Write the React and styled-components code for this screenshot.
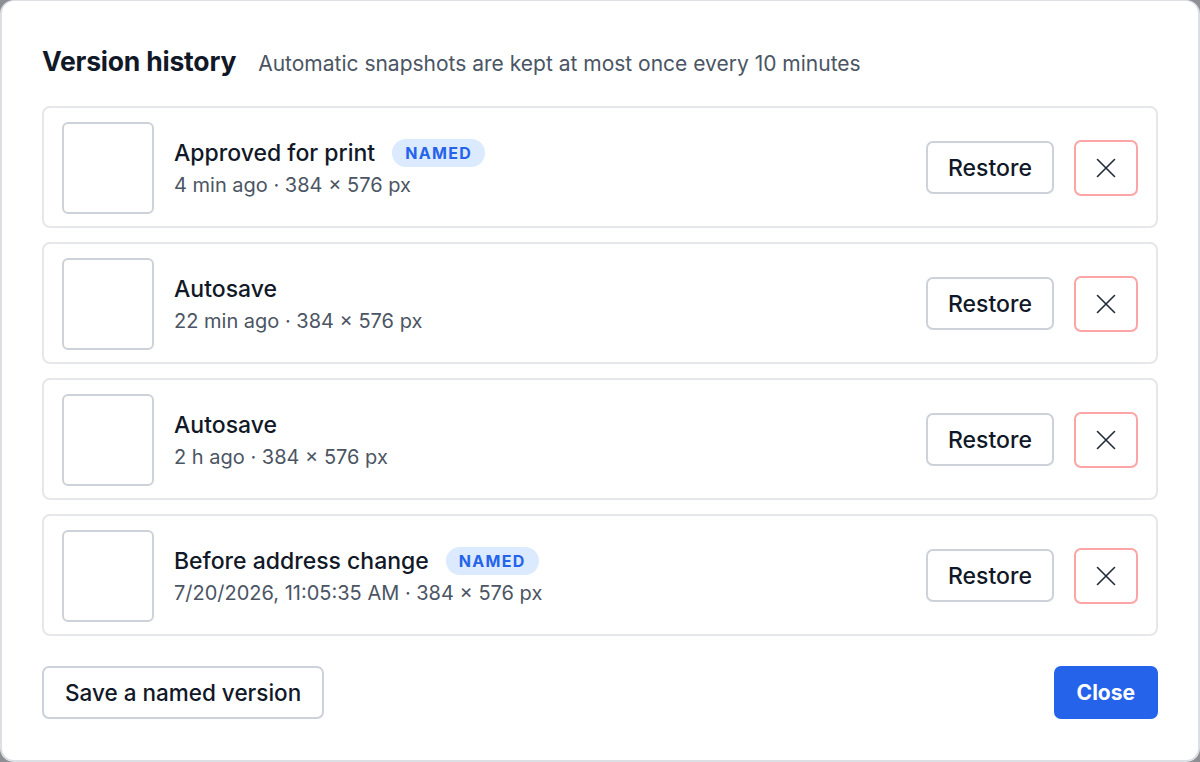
import React from 'react';
import styled, { createGlobalStyle } from 'styled-components';

const GlobalStyle = createGlobalStyle`
  html, body {
    margin: 0;
    padding: 0;
    background: #8d8f94;
  }
  body {
    font-family: Inter, "Noto Sans", sans-serif;
    color: #111827;
  }
  * { box-sizing: border-box; }
`;

const Dialog = styled.div`
  width: 1200px;
  height: 762px;
  background: #fff;
  border: 2px solid #dcdfe4;
  border-top-width: 1px;
  border-radius: 14px;
  padding: 37px 40px 41px 40px;
  display: flex;
  flex-direction: column;
`;

const Header = styled.header`
  display: flex;
  align-items: baseline;
  gap: 22px;
  height: 46px;
  line-height: 46px;
  margin-bottom: 22px;
`;

const Title = styled.h2`
  margin: 0;
  font-size: 26.5px;
  font-weight: 700;
  letter-spacing: -0.2px;
  color: #111827;
`;

const Subtitle = styled.span`
  font-size: 21px;
  color: #4b5563;
`;

const List = styled.div`
  display: flex;
  flex-direction: column;
  gap: 14px;
`;

const Row = styled.div`
  display: flex;
  align-items: center;
  height: 122px;
  padding: 1px 18px 0;
  border: 2px solid #e5e7eb;
  border-radius: 8px;
`;

const Thumb = styled.div`
  width: 92px;
  height: 92px;
  border: 2px solid #cdd1d9;
  border-radius: 6px;
  flex-shrink: 0;
`;

const Info = styled.div`
  flex: 1;
  display: flex;
  flex-direction: column;
  gap: 6px;
  margin-left: 20px;
`;

const NameLine = styled.div`
  display: flex;
  align-items: center;
  gap: 17px;
  height: 28px;
`;

const Name = styled.span`
  font-size: 23px;
  font-weight: 500;
  color: #111827;
`;

const Badge = styled.span`
  display: inline-flex;
  align-items: center;
  height: 28px;
  padding: 0 13px;
  border-radius: 14px;
  background: #dbeafe;
  color: #2563eb;
  font-size: 16px;
  font-weight: 700;
  letter-spacing: 1.3px;
`;

const Meta = styled.span`
  font-size: 20px;
  line-height: 24px;
  color: #4b5563;
`;

const Button = styled.button`
  font-family: inherit;
  height: 53px;
  padding: 0 21px;
  border-radius: 7px;
  cursor: pointer;
  border: 2px solid ${(p) => (p.$primary ? '#2563eb' : '#cdd1d9')};
  background: ${(p) => (p.$primary ? '#2563eb' : '#fff')};
  color: ${(p) => (p.$primary ? '#fff' : '#111827')};
  font-size: ${(p) => (p.$primary ? '21px' : '22.5px')};
  font-weight: ${(p) => (p.$primary ? 700 : 500)};
`;

const RestoreButton = styled(Button)`
  width: 128px;
  padding: 0;
  font-size: 23px;
`;

const DeleteButton = styled.button`
  width: 64px;
  height: 56px;
  margin-left: 20px;
  border: 2px solid #fca5a5;
  border-radius: 7px;
  background: #fff;
  color: #1f2937;
  display: flex;
  align-items: center;
  justify-content: center;
  cursor: pointer;
  padding: 0;
`;

const Footer = styled.footer`
  display: flex;
  justify-content: space-between;
  align-items: center;
  margin-top: 30px;
`;

const CloseIcon = () => (
  <svg width="20" height="20" viewBox="0 0 20 20" fill="none" stroke="currentColor" strokeWidth="1.6" strokeLinecap="round">
    <path d="M1.5 1.5L18.5 18.5M18.5 1.5L1.5 18.5" />
  </svg>
);

const versions = [
  { name: 'Approved for print', named: true, when: '4 min ago' },
  { name: 'Autosave', named: false, when: '22 min ago' },
  { name: 'Autosave', named: false, when: '2 h ago' },
  { name: 'Before address change', named: true, when: '7/20/2026, 11:05:35 AM' },
];

export default function App() {
  return (
    <>
      <GlobalStyle />
      <Dialog>
        <Header>
          <Title>Version history</Title>
          <Subtitle>Automatic snapshots are kept at most once every 10 minutes</Subtitle>
        </Header>
        <List>
          {versions.map((v, i) => (
            <Row key={i}>
              <Thumb />
              <Info>
                <NameLine>
                  <Name>{v.name}</Name>
                  {v.named && <Badge>NAMED</Badge>}
                </NameLine>
                <Meta>{v.when} · 384 × 576 px</Meta>
              </Info>
              <RestoreButton>Restore</RestoreButton>
              <DeleteButton aria-label="Delete">
                <CloseIcon />
              </DeleteButton>
            </Row>
          ))}
        </List>
        <Footer>
          <Button>Save a named version</Button>
          <Button $primary>Close</Button>
        </Footer>
      </Dialog>
    </>
  );
}
